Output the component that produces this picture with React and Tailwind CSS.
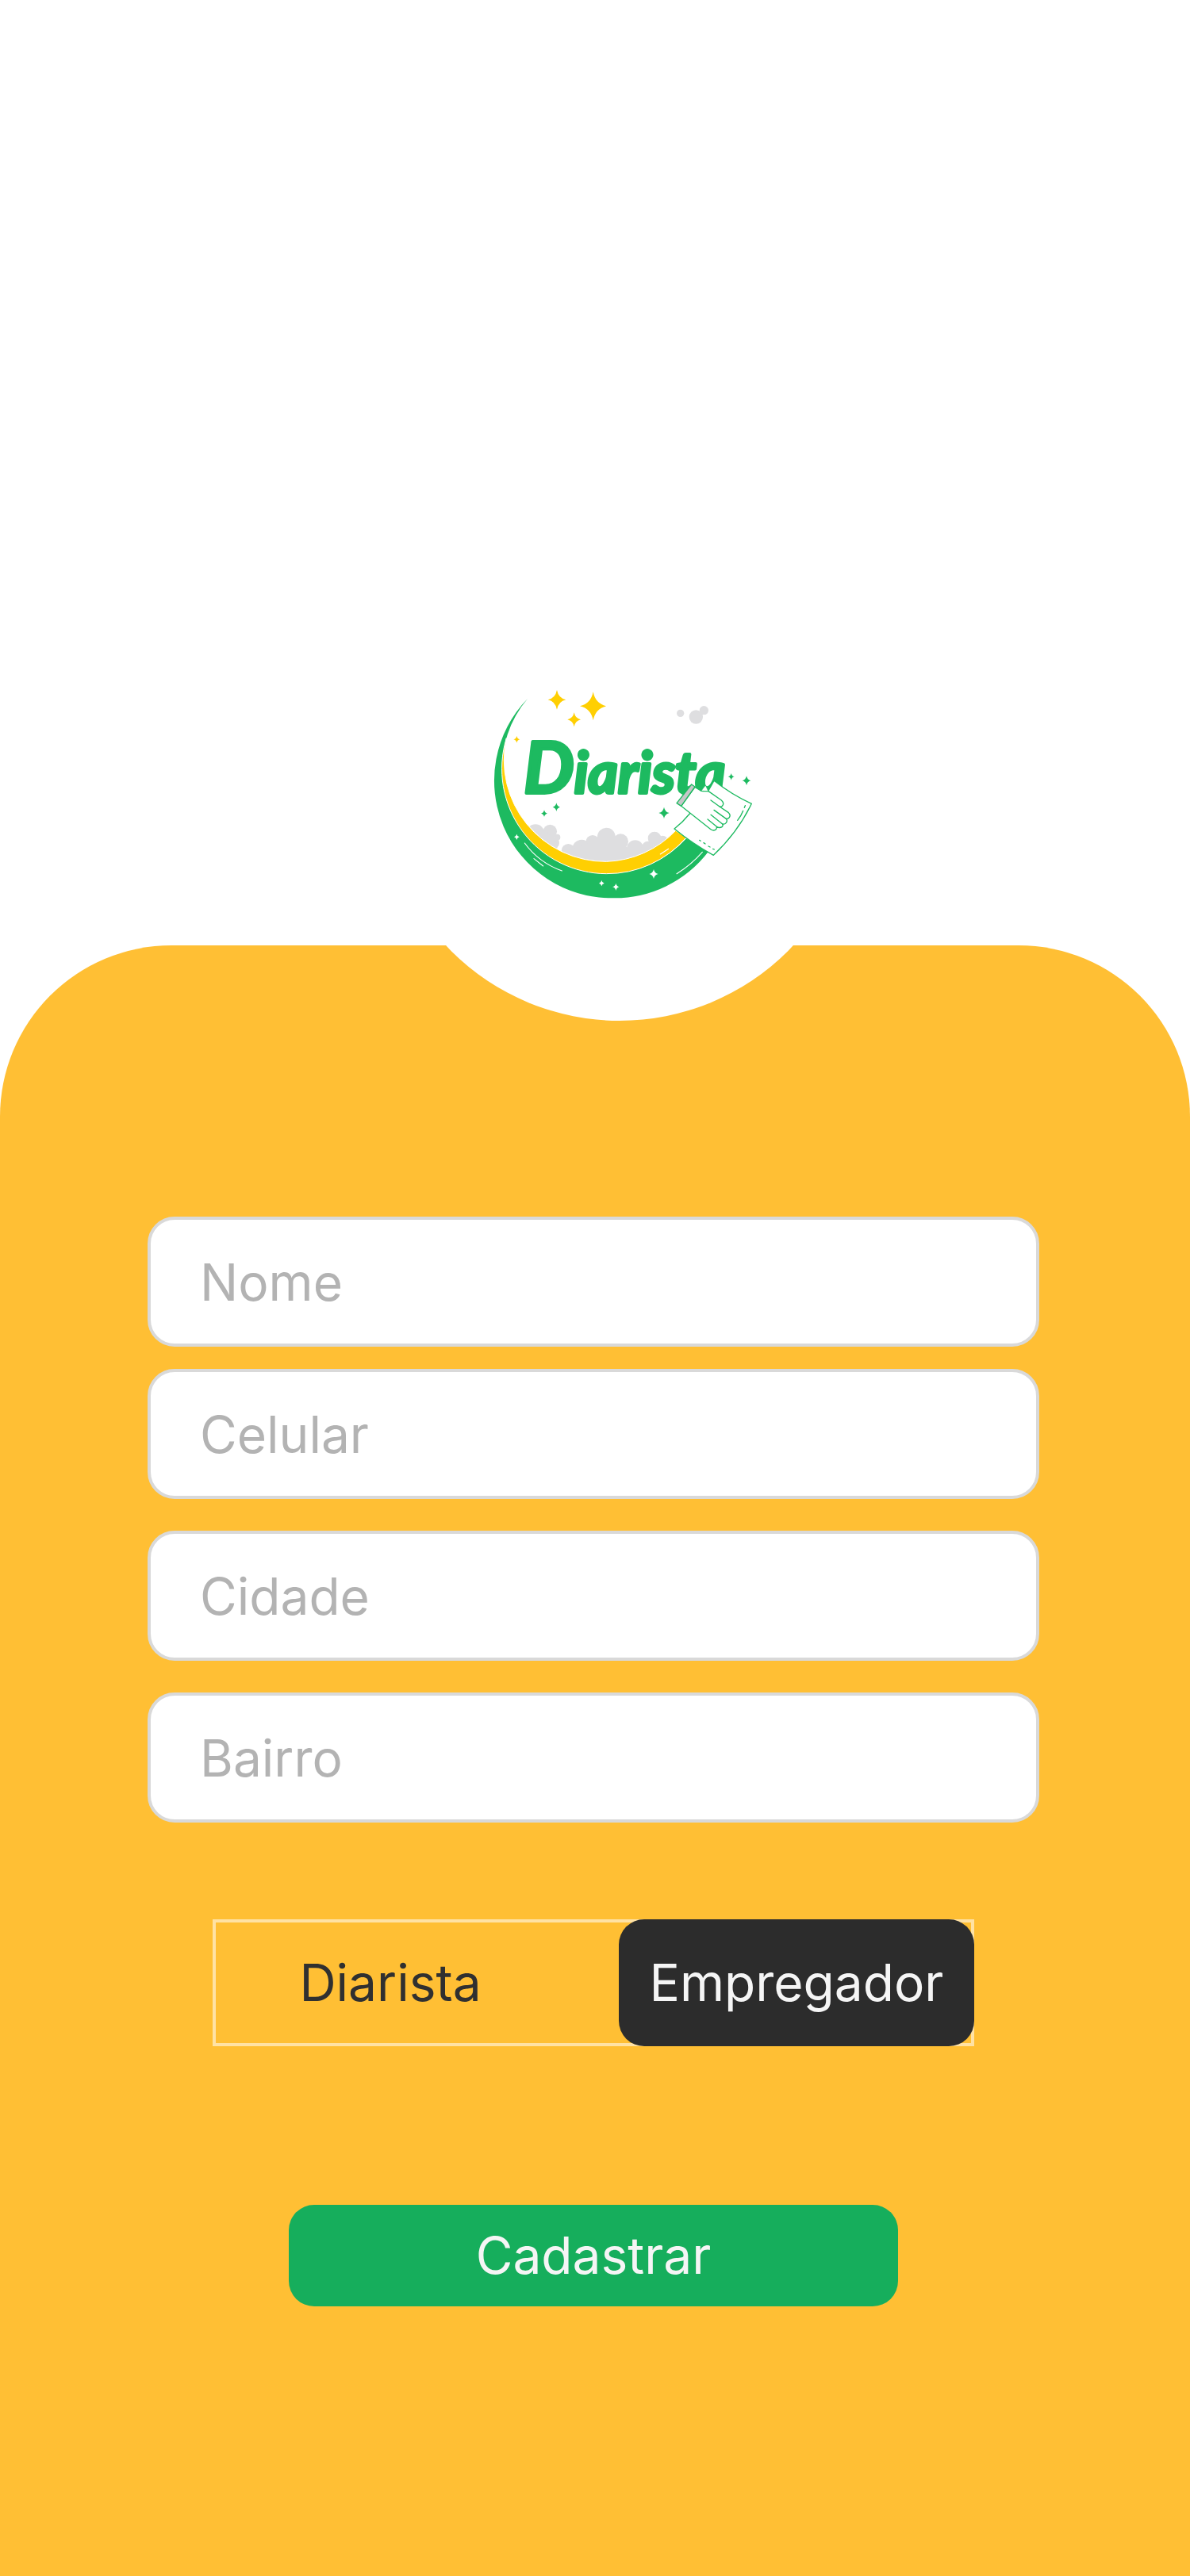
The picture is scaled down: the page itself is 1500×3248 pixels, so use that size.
import { useState } from "react";

const GREEN = "#1dba60";
const YELLOW = "#ffcf02";
const GRAY = "#dedee0";

function Star({ x, y, w, h, fill }) {
  const a = w * 0.17;
  const b = h * 0.17;
  const d = `M${x} ${y - h} Q${x + a} ${y - b} ${x + w} ${y} Q${x + a} ${y + b} ${x} ${y + h} Q${x - a} ${y + b} ${x - w} ${y} Q${x - a} ${y - b} ${x} ${y - h}Z`;
  return <path d={d} fill={fill} />;
}

const stars = [
  [276, 67, 34, 37, YELLOW],
  [413, 91, 50, 54, YELLOW],
  [341, 142, 25, 27, YELLOW],
  [124, 217, 12, 13, YELLOW],
  [274, 473, 14, 16, GREEN],
  [228, 497, 12, 13, GREEN],
  [681, 495, 20, 22, GREEN],
  [935, 358, 12, 13, GREEN],
  [993, 373, 16, 18, GREEN],
  [124, 586, 10, 11, "#fff"],
  [642, 726, 17, 18, "#fff"],
  [445, 761, 10, 11, "#fff"],
  [499, 775, 13, 14, "#fff"],
];

const clouds = [
  [195, 572, 34],
  [250, 565, 26],
  [277, 587, 12],
  [262, 608, 23],
  [225, 590, 26],
  [319, 638, 26],
  [370, 632, 36],
  [411, 605, 26],
  [463, 585, 34],
  [517, 603, 29],
  [572, 630, 32],
  [620, 625, 23],
  [645, 591, 25],
  [676, 600, 19],
];

function Logo() {
  return (
    <svg viewBox="-12 0 1050 870" className="h-[290px] w-[350px]" role="img" aria-label="Diarista">
      <defs>
        <clipPath id="sky">
          <circle cx="462" cy="294" r="384" />
        </clipPath>
      </defs>

      <g clipPath="url(#sky)" fill={GRAY}>
        {clouds.map(([x, y, r]) => (
          <circle key={`${x}-${y}`} cx={x} cy={y} r={r} />
        ))}
        <path d="M165 570 L283 610 L276 631 L240 640Z" />
        <path d="M295 640 L340 630 L420 600 L510 600 L560 640 L620 625 L700 590 L640 680 L460 700 L320 660Z" />
      </g>

      <path d="M165 63 A444 444 0 0 0 485 817 A447 447 0 0 0 850 640 L765 592 A400 400 0 0 1 165 63Z" fill={GREEN} />
      <path d="M85 212 A397 397 0 0 0 463 725 A396 396 0 0 0 765 588 L725 562 A380 380 0 0 1 463 679 A384 384 0 0 1 85 212Z" fill={YELLOW} stroke="#fff" strokeWidth="3" />

      <g fill="none" stroke="#fff" strokeWidth="3.5" strokeLinecap="round">
        <path d="M154 609 Q208 683 295 714" />
        <path d="M189 668 L224 696" />
        <path d="M667 651 L698 631" />
        <path d="M729 725 Q785 690 826 643" />
      </g>

      {stars.map(([x, y, w, h, fill]) => (
        <Star key={`${x}-${y}`} x={x} y={y} w={w} h={h} fill={fill} />
      ))}

      <g fill={GRAY}>
        <circle cx="743" cy="118" r="14" />
        <circle cx="802" cy="132" r="26" />
        <circle cx="832" cy="107" r="17" />
      </g>

      <text
        x="150"
        y="419"
        fill={GREEN}
        stroke={GREEN}
        strokeWidth="12"
        strokeLinejoin="round"
        style={{ fontFamily: 'Lato, "Liberation Sans", sans-serif', fontSize: "216px", fontWeight: 700, fontStyle: "italic" }}
      >
        <tspan style={{ fontSize: "270px" }}>D</tspan>iarista
      </text>

      <g stroke={GREEN} strokeWidth="4" strokeLinejoin="round" strokeLinecap="round">
        <path d="M778 498 Q752 530 720 555 Q790 612 868 655 Q960 568 1012 460 Q938 427 870 373 L848 412Z" fill="#fff" />
        <path
          d="M798 397 L820 411 Q834 414 848 412 L898 447 Q910 458 902 468 Q898 473 891 471 L925 494 Q934 502 928 512 Q924 519 916 517 Q922 524 916 532 Q911 539 902 537 Q906 543 900 548 Q892 553 880 548 Q881 560 868 561 Q862 561 856 556 L746 469Z"
          fill="#fff"
        />
        <path d="M785 387 L798 396 L746 469 L729 458Z" fill="#c6c6c9" />
        <path
          d="M858 447 L891 471 M870 484 L916 517 M858 502 L902 537 M846 519 L882 548"
          fill="none"
        />
        <path d="M822 411 L838 390 L848 412Z" fill="#fff" strokeWidth="2" />
        <path d="M959 523 Q973 506 980 487 M985 475 L988 467 M815 598 L819 601 M831 608 L837 612 M849 621 L855 624 M866 631 L871 633" fill="none" />
      </g>
    </svg>
  );
}

const fields = [
  { id: "nome", label: "Nome", type: "text", gap: "" },
  { id: "celular", label: "Celular", type: "tel", gap: "mt-7" },
  { id: "cidade", label: "Cidade", type: "text", gap: "mt-10" },
  { id: "bairro", label: "Bairro", type: "text", gap: "mt-10" },
];

const roles = ["Diarista", "Empregador"];

export default function App() {
  const [role, setRole] = useState("Empregador");

  return (
    <div className="flex min-h-screen flex-col overflow-hidden bg-white font-[Inter,sans-serif] text-[64px] leading-[80px]">
      <header className="z-10 -mb-[95px] flex justify-center pt-[687px] pl-[62px]">
        <div className="flex size-[600px] shrink-0 justify-center rounded-full bg-white pt-[173px]">
          <Logo />
        </div>
      </header>

      <main className="flex grow flex-col rounded-t-[216px] bg-[#ffbf34] pt-[342px] pr-9 pb-20 pl-8">
        <form className="flex flex-col items-center" onSubmit={(e) => e.preventDefault()}>
          {fields.map(({ id, label, type, gap }) => (
            <div key={id} className={`w-full max-w-[1124px] ${gap}`}>
              <input
                id={id}
                name={id}
                type={type}
                aria-label={label}
                placeholder={label}
                className="block h-[164px] w-full rounded-[34px] border-4 border-[#d9d9d9] bg-white px-[62px] text-[#2c2c2c] placeholder:text-[#b3b3b3] placeholder:opacity-100"
              />
            </div>
          ))}

          <div
            role="group"
            aria-label="Tipo de conta"
            className="mt-[122px] flex h-40 w-full max-w-[960px] justify-between shadow-[inset_0_0_0_4px_#ffe2a4]"
          >
            {roles.map((name) => (
              <button
                key={name}
                type="button"
                aria-pressed={role === name}
                onClick={() => setRole(name)}
                className="w-[448px] rounded-[32px] text-[#303030] aria-pressed:bg-[#2c2c2c] aria-pressed:text-[#f5f5f5]"
              >
                {name}
              </button>
            ))}
          </div>

          <button type="submit" className="mt-[200px] h-32 w-full max-w-[768px] rounded-[32px] bg-[#16ae5c] text-[#f5f5f5]">
            Cadastrar
          </button>
        </form>
      </main>
    </div>
  );
}
